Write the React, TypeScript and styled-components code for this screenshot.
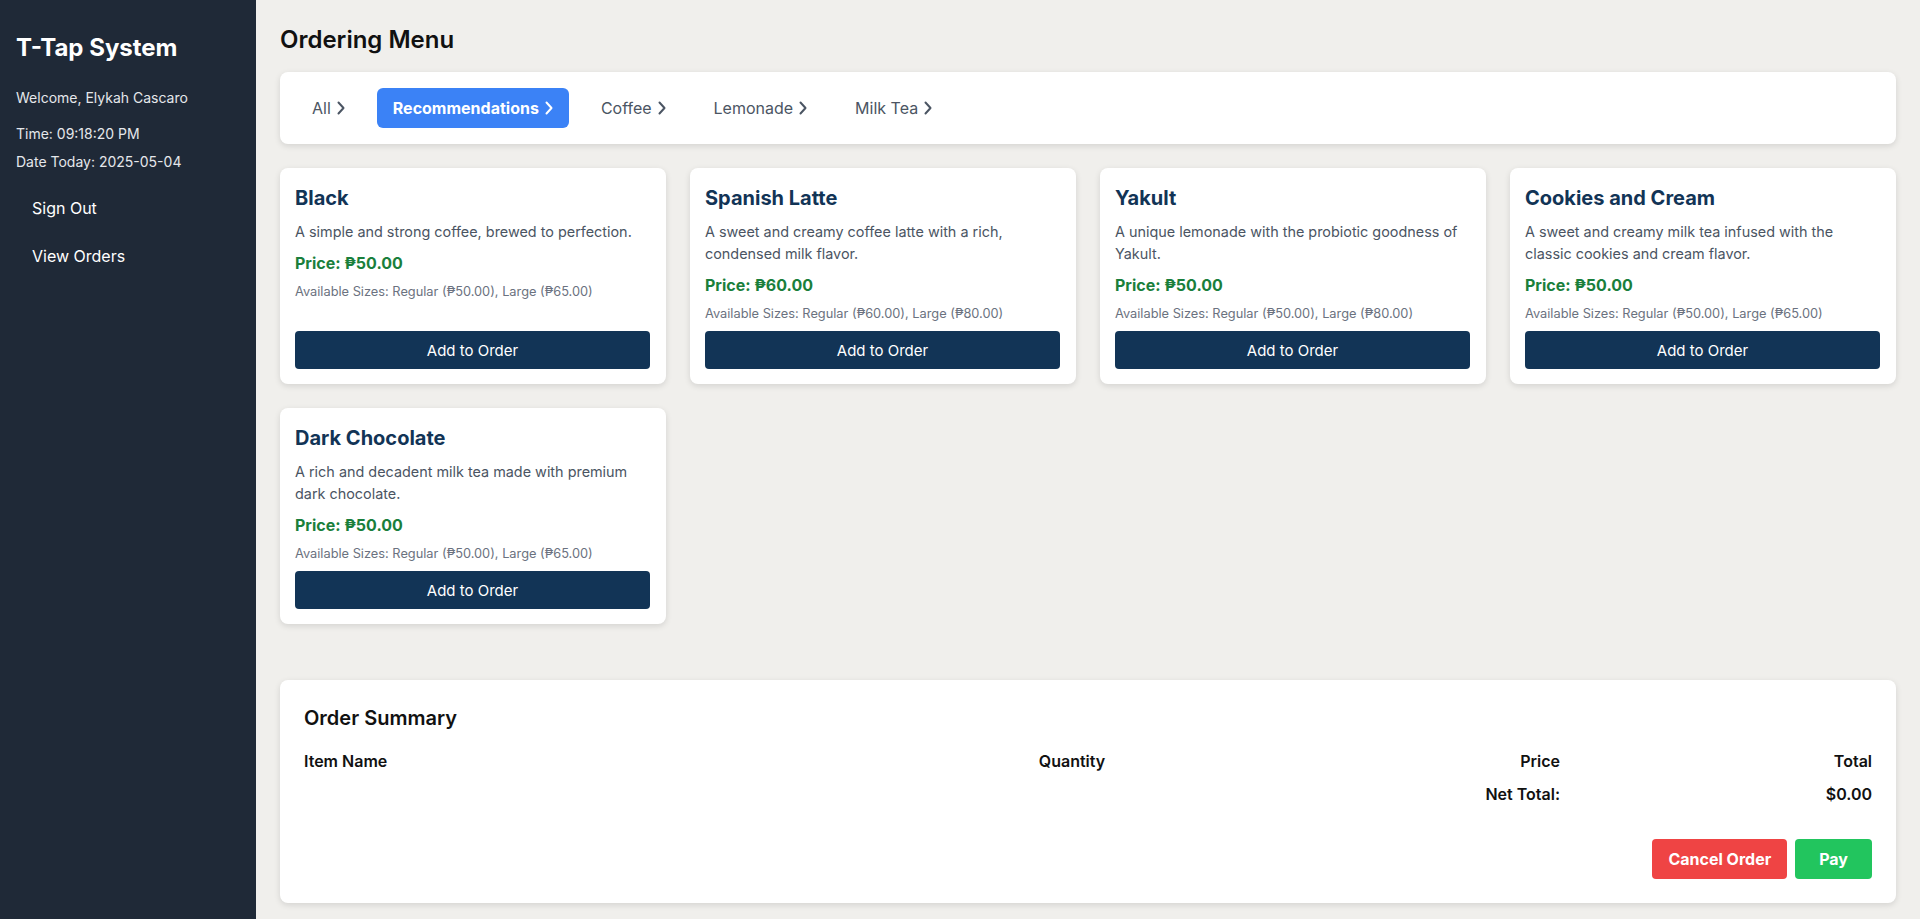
import React from "react";
import styled, { createGlobalStyle } from "styled-components";

const GlobalStyle = createGlobalStyle`
  * { box-sizing: border-box; }
  html, body { margin: 0; padding: 0; }
  body {
    font-family: Inter, "Noto Sans", Arial, sans-serif;
    background: #f0efec;
    color: #111827;
    overflow: hidden;
  }
`;

const Layout = styled.div`
  display: flex;
  min-height: 100vh;
`;

const Sidebar = styled.aside`
  width: 256px;
  flex-shrink: 0;
  background: #1f2937;
  color: #ffffff;
  padding: 16px;
  display: flex;
  flex-direction: column;
`;

const Brand = styled.h1`
  font-size: 24px;
  line-height: 32px;
  font-weight: 700;
  margin: 16px 0 24px;
`;

const InfoLine = styled.p<{ $gap: number }>`
  font-size: 14px;
  line-height: 20px;
  color: #e5e7eb;
  margin: 0 0 ${(p) => p.$gap}px;
`;

const NavLink = styled.a`
  display: block;
  padding: 12px 16px;
  font-size: 16px;
  line-height: 24px;
  color: #ffffff;
  text-decoration: none;
  cursor: pointer;
`;

const Main = styled.main`
  flex: 1;
  padding: 24px 24px 16px;
  min-width: 0;
`;

const PageTitle = styled.h2`
  font-size: 24px;
  line-height: 32px;
  font-weight: 600;
  margin: 0 0 16px;
  color: #111111;
`;

const TabBar = styled.nav`
  background: #ffffff;
  border-radius: 8px;
  box-shadow: 0 2px 6px rgba(0, 0, 0, 0.12);
  padding: 16px;
  display: flex;
  gap: 16px;
  margin-bottom: 24px;
`;

const Tab = styled.button<{ $active?: boolean }>`
  display: inline-flex;
  align-items: center;
  gap: 6px;
  height: 40px;
  padding: 0 16px;
  border: none;
  border-radius: 6px;
  font-family: inherit;
  font-size: 16px;
  font-weight: ${(p) => (p.$active ? 700 : 400)};
  background: ${(p) => (p.$active ? "#3b82f6" : "transparent")};
  color: ${(p) => (p.$active ? "#ffffff" : "#4b5563")};
  cursor: pointer;
`;

const Grid = styled.div`
  display: grid;
  grid-template-columns: repeat(4, 1fr);
  gap: 24px;
  margin-bottom: 56px;
`;

const Card = styled.div`
  background: #ffffff;
  border-radius: 8px;
  box-shadow: 0 2px 6px rgba(0, 0, 0, 0.12);
  padding: 16px 16px 15px 15px;
  display: flex;
  flex-direction: column;
`;

const CardTitle = styled.h3`
  font-size: 20px;
  line-height: 29px;
  font-weight: 700;
  color: #123456;
  margin: 0 0 8px;
`;

const Desc = styled.p`
  font-size: 14.4px;
  line-height: 22px;
  color: #4b5563;
  margin: 0 0 8px;
`;

const Price = styled.p`
  font-size: 16px;
  line-height: 24px;
  font-weight: 700;
  color: #1a7f3c;
  margin: 0 0 8px;
`;

const Sizes = styled.p`
  font-size: 12.8px;
  line-height: 18px;
  color: #6b7280;
  margin: 0 0 8px;
`;

const AddButton = styled.button`
  margin-top: auto;
  height: 38px;
  width: 100%;
  border: none;
  border-radius: 4px;
  background: #123456;
  color: #ffffff;
  font-family: inherit;
  font-size: 15px;
  cursor: pointer;
`;

const Summary = styled.section`
  background: #ffffff;
  border-radius: 8px;
  box-shadow: 0 2px 6px rgba(0, 0, 0, 0.12);
  padding: 24px;
`;

const SummaryTitle = styled.h3`
  font-size: 20px;
  line-height: 28px;
  font-weight: 600;
  margin: 0 0 13px;
  color: #111111;
`;

const Row = styled.div`
  display: grid;
  grid-template-columns: 592fr 352fr 312fr 312fr;
  padding: 4px 0 5px;
  font-size: 16px;
  line-height: 24px;
  font-weight: 600;
  color: #111111;
`;

const Cell = styled.div<{ $align?: "left" | "center" | "right" }>`
  text-align: ${(p) => p.$align || "left"};
`;

const Actions = styled.div`
  display: flex;
  justify-content: flex-end;
  gap: 8px;
  margin-top: 28px;
`;

const ActionButton = styled.button<{ $variant: "cancel" | "pay" }>`
  height: 40px;
  padding: 0 ${(p) => (p.$variant === "pay" ? 24 : 16)}px;
  border: none;
  border-radius: 4px;
  background: ${(p) => (p.$variant === "pay" ? "#22c55e" : "#ef4444")};
  color: #ffffff;
  font-family: inherit;
  font-size: 16px;
  font-weight: 700;
  cursor: pointer;
`;

const Chevron = () => (
  <svg width="8" height="14" viewBox="0 0 8 14" fill="none">
    <path d="M1.5 1.5 L6.5 7 L1.5 12.5" stroke="currentColor" strokeWidth="2" strokeLinecap="round" strokeLinejoin="round" />
  </svg>
);

const tabs = ["All", "Recommendations", "Coffee", "Lemonade", "Milk Tea"];

const items = [
  {
    name: "Black",
    desc: "A simple and strong coffee, brewed to perfection.",
    price: "₱50.00",
    sizes: "Available Sizes: Regular (₱50.00), Large (₱65.00)",
  },
  {
    name: "Spanish Latte",
    desc: "A sweet and creamy coffee latte with a rich, condensed milk flavor.",
    price: "₱60.00",
    sizes: "Available Sizes: Regular (₱60.00), Large (₱80.00)",
  },
  {
    name: "Yakult",
    desc: "A unique lemonade with the probiotic goodness of Yakult.",
    price: "₱50.00",
    sizes: "Available Sizes: Regular (₱50.00), Large (₱80.00)",
  },
  {
    name: "Cookies and Cream",
    desc: "A sweet and creamy milk tea infused with the classic cookies and cream flavor.",
    price: "₱50.00",
    sizes: "Available Sizes: Regular (₱50.00), Large (₱65.00)",
  },
  {
    name: "Dark Chocolate",
    desc: "A rich and decadent milk tea made with premium dark chocolate.",
    price: "₱50.00",
    sizes: "Available Sizes: Regular (₱50.00), Large (₱65.00)",
  },
];

export default function App() {
  return (
    <>
      <GlobalStyle />
      <Layout>
        <Sidebar>
          <Brand>T-Tap System</Brand>
          <InfoLine $gap={16}>Welcome, Elykah Cascaro</InfoLine>
          <InfoLine $gap={8}>Time: 09:18:20 PM</InfoLine>
          <InfoLine $gap={12}>Date Today: 2025-05-04</InfoLine>
          <NavLink>Sign Out</NavLink>
          <NavLink>View Orders</NavLink>
        </Sidebar>
        <Main>
          <PageTitle>Ordering Menu</PageTitle>
          <TabBar>
            {tabs.map((t) => (
              <Tab key={t} $active={t === "Recommendations"}>
                {t}
                <Chevron />
              </Tab>
            ))}
          </TabBar>
          <Grid>
            {items.map((it) => (
              <Card key={it.name}>
                <CardTitle>{it.name}</CardTitle>
                <Desc>{it.desc}</Desc>
                <Price>Price: {it.price}</Price>
                <Sizes>{it.sizes}</Sizes>
                <AddButton>Add to Order</AddButton>
              </Card>
            ))}
          </Grid>
          <Summary>
            <SummaryTitle>Order Summary</SummaryTitle>
            <Row>
              <Cell>Item Name</Cell>
              <Cell $align="center">Quantity</Cell>
              <Cell $align="right">Price</Cell>
              <Cell $align="right">Total</Cell>
            </Row>
            <Row>
              <Cell />
              <Cell />
              <Cell $align="right">Net Total:</Cell>
              <Cell $align="right">$0.00</Cell>
            </Row>
            <Actions>
              <ActionButton $variant="cancel">Cancel Order</ActionButton>
              <ActionButton $variant="pay">Pay</ActionButton>
            </Actions>
          </Summary>
        </Main>
      </Layout>
    </>
  );
}
